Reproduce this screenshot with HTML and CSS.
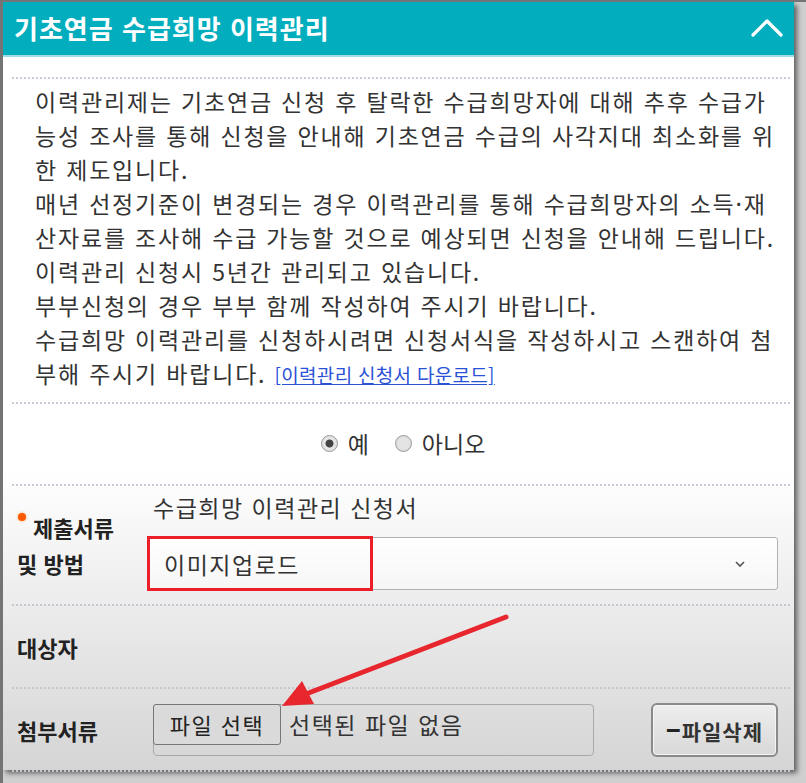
FILE: index.html
```html
<!DOCTYPE html>
<html lang="ko">
<head>
    <meta charset="UTF-8">
    <meta name="viewport" content="width=device-width, initial-scale=1.0">
    <title>기초연금 수급희망 이력관리</title>
    <link rel="stylesheet" href="styles.css">
</head>
<body>
    <div class="panel">
        <div class="panel-head">
            <h2>기초연금 수급희망 이력관리</h2>
            <svg class="fold" width="34" height="20" viewBox="0 0 34 20"><path d="M3 17 L17 3 L31 17" fill="none" stroke="#fff" stroke-width="3.2" stroke-linecap="round" stroke-linejoin="round"/></svg>
        </div>
        <div class="intro">
            <p>이력관리제는 기초연금 신청 후 탈락한 수급희망자에 대해 추후 수급가능성 조사를 통해 신청을 안내해 기초연금 수급의 사각지대 최소화를 위한 제도입니다.</p>
            <p>매년 선정기준이 변경되는 경우 이력관리를 통해 수급희망자의 소득·재산자료를 조사해 수급 가능할 것으로 예상되면 신청을 안내해 드립니다.</p>
            <p>이력관리 신청시 5년간 관리되고 있습니다.</p>
            <p>부부신청의 경우 부부 함께 작성하여 주시기 바랍니다.</p>
            <p>수급희망 이력관리를 신청하시려면 신청서식을 작성하시고 스캔하여 첨부해 주시기 바랍니다. <a href="#" class="down">[이력관리 신청서 다운로드]</a></p>
        </div>
        <div class="agree">
            <label><input type="radio" name="agree" checked>예</label>
            <label><input type="radio" name="agree">아니오</label>
        </div>
        <div class="form">
            <div class="row row-first">
                <div class="label req">제출서류<br>및 방법</div>
                <div class="field">
                    <div class="doc-name">수급희망 이력관리 신청서</div>
                    <div class="select">
                        <span>이미지업로드</span>
                        <svg width="12" height="8" viewBox="0 0 12 8"><path d="M2 2 L6 6 L10 2" fill="none" stroke="#555" stroke-width="1.6"/></svg>
                        <div class="mark"></div>
                    </div>
                </div>
            </div>
            <div class="row">
                <div class="label">대상자</div>
                <div class="field"></div>
            </div>
            <div class="row">
                <div class="label">첨부서류</div>
                <div class="field files">
                    <div class="file-box">
                        <button class="pick">파일 선택</button>
                        <span>선택된 파일 없음</span>
                    </div>
                    <button class="del"><b>−</b>파일삭제</button>
                </div>
            </div>
        </div>
        <svg class="arrow" width="240" height="100" viewBox="0 0 240 100">
            <line x1="226" y1="8" x2="26" y2="85" stroke="#e8262d" stroke-width="5" stroke-linecap="round"/>
            <polygon points="2,97 22,72 34,95" fill="#e8262d"/>
        </svg>
    </div>
</body>
</html>
```

FILE: styles.css
```css
* {
    margin: 0;
    padding: 0;
    box-sizing: border-box;
}
body {
    background: #cfcfcf;
    font-family: "Noto Sans CJK KR", "Noto Sans", sans-serif;
    color: #333;
    border-top: 2px solid #747474;
    border-left: 3px solid #747474;
    height: 783px;
    overflow: hidden;
}
.panel {
    width: 791px;
    height: 768px;
    background: linear-gradient(#fff 0, #fff 470px, #d5d5d5 768px);
    box-shadow: 3px 3px 5px rgba(0, 0, 0, 0.55);
    position: relative;
}
.panel-head {
    height: 55px;
    background: #02adbe;
    border-bottom: 2px solid #9fdde4;
    display: flex;
    align-items: center;
    justify-content: space-between;
    padding: 0 10px 2px 11px;
}
.panel-head h2 {
    color: #fff;
    font-size: 26px;
    font-weight: bold;
    letter-spacing: 1px;
}
.intro {
    margin: 20px 4px 0 9px;
    border-top: 2px dotted #c9cbd9;
    border-bottom: 2px dotted #c9cbd9;
    padding: 5px 8px 12px 23px;
    font-size: 23px;
    line-height: 34px;
    letter-spacing: 1.8px;
}
.down {
    color: #2a52d6;
    font-size: 19px;
    line-height: 20px;
    letter-spacing: 0.3px;
}
.agree {
    height: 82px;
    margin: 0 4px 0 9px;
    border-bottom: 2px dotted #c9cbd9;
    display: flex;
    justify-content: center;
    align-items: center;
    gap: 26px;
    font-size: 23px;
    padding: 0 0 2px 4px;
}
.agree label {
    display: flex;
    align-items: center;
    gap: 10px;
}
.agree input {
    appearance: none;
    width: 17px;
    height: 17px;
    border-radius: 50%;
    border: 1px solid #9a9a9a;
    background: radial-gradient(circle, #e4e4e4 50%, #cfcfcf 100%);
}
.agree input:checked {
    background: radial-gradient(circle, #444 0 3.5px, #e9e9e9 4.5px, #d4d4d4 100%);
}
.row {
    height: 83px;
    margin: 0 4px 0 9px;
    border-bottom: 2px dotted #c4c6d2;
    display: flex;
    align-items: center;
}
.row-first {
    height: 120px;
}
.label {
    width: 136px;
    padding-left: 5px;
    font-size: 22px;
    font-weight: bold;
    line-height: 36px;
    color: #222;
}
.req {
    position: relative;
    text-indent: 16px;
}
.req::before {
    content: "";
    position: absolute;
    left: 6px;
    top: 4px;
    width: 8px;
    height: 8px;
    border-radius: 50%;
    background: #ff5a00;
    box-shadow: 0 0 3px #ffb070;
}
.field {
    flex: 1;
    padding-right: 12px;
}
.doc-name {
    font-size: 23px;
    letter-spacing: 1.5px;
    line-height: 34px;
    padding-left: 5px;
    margin-top: -10px;
}
.select {
    position: relative;
    margin-top: 13px;
    height: 53px;
    border: 1px solid #b2b2b2;
    border-radius: 3px;
    background: linear-gradient(#fff, #f6f6f6);
    display: flex;
    align-items: center;
    justify-content: space-between;
    padding: 0 31px 0 15px;
    font-size: 23px;
    letter-spacing: 1.5px;
}
.mark {
    position: absolute;
    left: -2px;
    top: -2px;
    width: 226px;
    height: 55px;
    border: 3px solid #ea1f2a;
}
.files {
    display: flex;
    align-items: center;
    justify-content: space-between;
    padding-left: 5px;
}
.file-box {
    width: 441px;
    height: 52px;
    border: 1px solid #a9a9a9;
    border-radius: 4px;
    display: flex;
    align-items: flex-start;
    gap: 8px;
    font-size: 23px;
    letter-spacing: 1.5px;
    line-height: 38px;
}
.pick {
    width: 128px;
    height: 41px;
    margin: -1px 0 0 -1px;
    background: #dadada;
    border: 1px solid #777;
    border-radius: 3px;
    font-family: inherit;
    font-size: 22px;
    letter-spacing: 1.5px;
    color: #222;
}
.del {
    width: 127px;
    height: 54px;
    border: 2px solid #8a8a8a;
    border-radius: 6px;
    background: linear-gradient(#eee, #d8d8d8);
    font-family: inherit;
    font-size: 21px;
    font-weight: bold;
    letter-spacing: 1px;
    color: #333;
    box-shadow: inset 0 0 0 1px #f4f4f4;
}
.del b {
    font-size: 24px;
    color: #222;
}
.arrow {
    position: absolute;
    left: 277px;
    top: 607px;
}
```
